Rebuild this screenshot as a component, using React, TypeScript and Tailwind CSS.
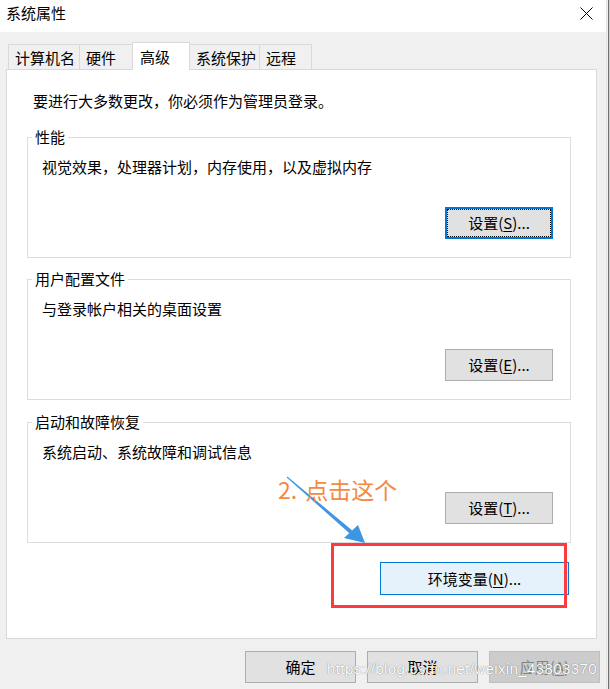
import React from "react";

const cjk = "font-['Noto_Sans_CJK_SC',sans-serif]";

function Btn({ children, focused, className = "" }: { children: React.ReactNode; focused?: boolean; className?: string }) {
  return (
    <div
      className={
        "flex items-center justify-center text-[15px] leading-[20px] text-black bg-[#e1e1e1] " +
        (focused
          ? "border-2 border-[#0078d7] outline-1 outline-dotted outline-black outline-offset-[-3px] "
          : "border border-[#adadad] ") +
        className
      }
    >
      {children}
    </div>
  );
}

function Group({ label, desc, btn, focused, className = "" }: { label: string; desc: string; btn: React.ReactNode; focused?: boolean; className?: string }) {
  return (
    <div className={"relative w-[544px] h-[121px] border border-[#dcdcdc] flex flex-col " + className}>
      <div className="absolute left-[4px] top-[-11px] bg-white px-[3px] text-[15px] leading-[20px] text-black">{label}</div>
      <div className="pl-[14px] pt-[19px] text-[15px] leading-[20px] text-black">{desc}</div>
      <Btn focused={focused} className="mt-auto self-end mr-[17px] mb-[18px] w-[108px] h-[32px]">
        {btn}
      </Btn>
    </div>
  );
}

function Tab({ label, w, selected }: { label: string; w: string; selected?: boolean }) {
  if (selected) {
    return (
      <div className={"h-[28px] bg-white border border-b-0 border-[#d9d9d9] pl-[7px] pt-[4px] text-[15px] leading-[20px] -ml-px relative z-10 " + w}>
        {label}
      </div>
    );
  }
  return (
    <div className={"h-[25px] mb-[1px] bg-[#f0f0f0] border border-b-0 border-[#d9d9d9] pl-[6px] pt-[3px] text-[15px] leading-[20px] -ml-px " + w}>
      {label}
    </div>
  );
}

export default function App() {
  return (
    <div className={"relative w-[610px] h-[689px] overflow-hidden flex bg-[#f0f0f0] text-black " + cjk}>
      <div className="w-[606px] h-full flex flex-col">
        {/* title bar */}
        <div className="h-[32px] bg-white flex items-start pl-[6px] pt-[3px] pr-[13px] shrink-0">
          <div className="text-[15px] leading-[20px]">系统属性</div>
          <svg className="ml-auto mt-[4px]" width="13" height="13" viewBox="0 0 13 13">
            <path d="M0.5 0.5 L12.5 12.5 M12.5 0.5 L0.5 12.5" stroke="#000" strokeWidth="1" fill="none" />
          </svg>
        </div>
        {/* tabs */}
        <div className="flex items-end h-[28px] mt-[10px] -mb-px ml-[9px] relative z-10 shrink-0">
          <Tab label="计算机名" w="w-[72px]" />
          <Tab label="硬件" w="w-[54px]" />
          <Tab label="高级" w="w-[58px]" selected />
          <Tab label="系统保护" w="w-[71px]" />
          <Tab label="远程" w="w-[53px]" />
        </div>
        {/* panel */}
        <div className="ml-[6px] w-[591px] h-[570px] border border-[#d9d9d9] bg-white pt-[21px] pl-[20px] flex flex-col shrink-0">
          <div className="ml-[6px] text-[15px] leading-[20px]">要进行大多数更改，你必须作为管理员登录。</div>
          <Group
            className="mt-[26px]"
            label="性能"
            desc="视觉效果，处理器计划，内存使用，以及虚拟内存"
            focused
            btn={<span>设置(<span className="underline underline-offset-2">S</span>)...</span>}
          />
          <Group
            className="mt-[21px]"
            label="用户配置文件"
            desc="与登录帐户相关的桌面设置"
            btn={<span>设置(<span className="underline underline-offset-2">E</span>)...</span>}
          />
          <Group
            className="mt-[22px]"
            label="启动和故障恢复"
            desc="系统启动、系统故障和调试信息"
            btn={<span>设置(<span className="underline underline-offset-2">T</span>)...</span>}
          />
          <div className="mt-[19px] ml-[353px] w-[189px] h-[33px] border border-[#0078d7] bg-[#e5f1fb] flex items-center justify-center text-[15px] leading-[20px]">
            <span>环境变量(<span className="underline underline-offset-2">N</span>)...</span>
          </div>
        </div>
        {/* bottom buttons */}
        <div className="flex gap-[11px] mt-[12px] ml-[245px] shrink-0">
          <Btn className="w-[111px] h-[32px]">确定</Btn>
          <Btn className="w-[111px] h-[32px]">取消</Btn>
          <div className="w-[111px] h-[32px] border border-[#bfbfbf] bg-[#cccccc] flex items-center justify-center text-[15px] leading-[20px] text-[#838383]">
            <span>应用(<span className="underline underline-offset-2">A</span>)</span>
          </div>
        </div>
      </div>
      {/* right edge strip */}
      <div className="flex h-full">
        <div className="w-px h-full bg-[#e4e4e4]" />
        <div className="w-px h-full bg-[#f0f0f0]" />
        <div className="w-px h-full bg-[#6f6f6f]" />
        <div className="w-px h-full bg-[#d0d0d0]" />
      </div>

      {/* annotations */}
      <div className="absolute left-[331px] top-[543px] w-[236px] h-[65px] border-[3px] border-[#fb3b3e] z-20 pointer-events-none" />
      <svg className="absolute left-0 top-0 z-30 pointer-events-none" width="610" height="689" viewBox="0 0 610 689">
        <polygon points="287.3,476.6 352.3,530.5 349.7,533.5 286.7,477.4" fill="#3d96e3" />
        <polygon points="365,543 344,538 358,525" fill="#3d96e3" />
      </svg>
      <div className="absolute left-[278px] top-[477px] z-30 text-[23px] leading-[24px] text-[#f38a3f] whitespace-nowrap">
        <span>2. </span>
        <span className="ml-[3px]">点击这个</span>
      </div>
      <div className="absolute left-[327px] top-[659px] z-30 whitespace-nowrap font-['Liberation_Sans',Arial,sans-serif] text-[15px] leading-[20px] tracking-[0.4px] text-white [text-shadow:0_0_1px_rgba(0,0,0,0.6)]">
        https://blog.csdn.net/weixin_43803370
      </div>
    </div>
  );
}
